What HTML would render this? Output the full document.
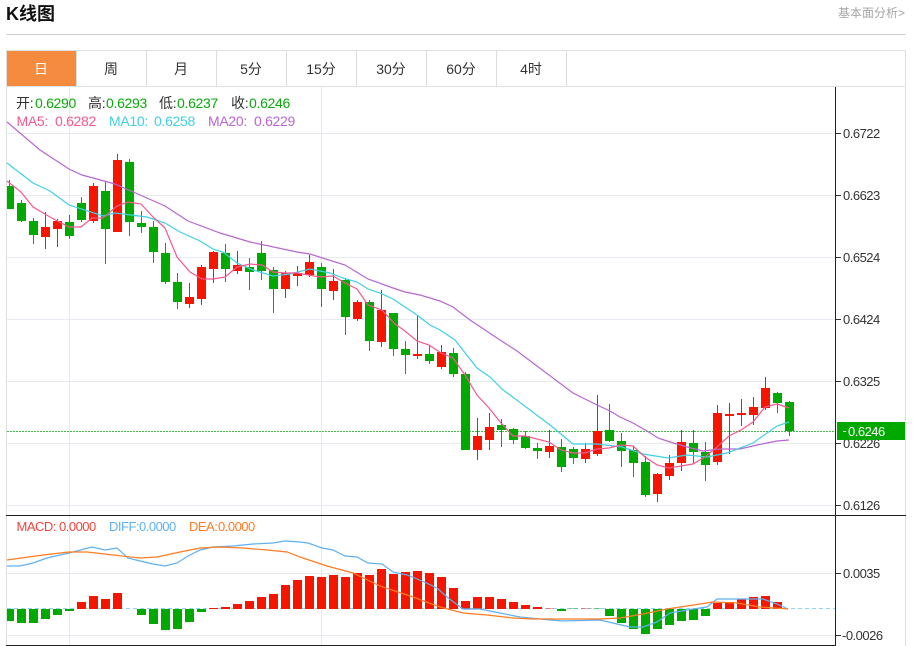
<!DOCTYPE html>
<html lang="zh-CN">
<head>
<meta charset="utf-8">
<title>K线图</title>
<style>
html,body{margin:0;padding:0;background:#fff;width:913px;height:646px;overflow:hidden}
svg{display:block;font-family:"Liberation Sans","Noto Sans CJK SC",sans-serif}
.tab{font-size:14px;fill:#333;text-anchor:middle}
.ax{font-size:13px;letter-spacing:-.5px;fill:#333}
.lg{font-size:14px;letter-spacing:-.3px}
.ml{font-size:13px;letter-spacing:-.5px}
</style>
</head>
<body>
<svg width="913" height="646" viewBox="0 0 913 646" xmlns="http://www.w3.org/2000/svg">
<!-- header -->
<text x="6" y="20" font-size="18" font-weight="700" fill="#111">K线图</text>
<text x="838" y="17" font-size="12" fill="#a5a5a5">基本面分析&gt;</text>
<path d="M6 34.5H906" stroke="#cfcfcf" fill="none"/>
<!-- frame -->
<path d="M6.5 51V646M905.5 51V646M6 50.5H906M6 86.5H906" stroke="#e0e0e0" fill="none"/>
<!-- tabs -->
<rect x="7" y="51" width="69" height="35" fill="#f58b3f"/>
<path d="M76.5 51V86M146.5 51V86M216.5 51V86M286.5 51V86M356.5 51V86M426.5 51V86M496.5 51V86M566.5 51V86" stroke="#dcdcdc" fill="none"/>
<text class="tab" x="41" y="74" style="fill:#fff">日</text>
<text class="tab" x="111" y="74">周</text>
<text class="tab" x="181" y="74">月</text>
<text class="tab" x="251" y="74">5分</text>
<text class="tab" x="321" y="74">15分</text>
<text class="tab" x="391" y="74">30分</text>
<text class="tab" x="461" y="74">60分</text>
<text class="tab" x="531" y="74">4时</text>
<!-- grid -->
<path d="M7 133.5H835M7 195.5H835M7 257.5H835M7 319.5H835M7 381.5H835M7 443.5H835M7 505.5H835M7 573.5H835M7 635.5H835M69.5 87V515M321.5 87V515M69.5 516V645M321.5 516V645" stroke="#e6ebf1" fill="none"/>
<!-- price dotted line -->
<path d="M7 431.5H835" stroke="#45b545" stroke-dasharray="2 1" fill="none"/>
<!-- green wicks -->
<path stroke="#00a800" fill="none" d="M9.5 180V209M21.5 200V222M33.5 218V244M69.5 215V239M81.5 197V222M105.5 182V264M129.5 159V236M141.5 211V233M153.5 221V263M165.5 243V284M177.5 273V309M225.5 244V282M249.5 258V290M261.5 241V280M273.5 267V313M321.5 263V307M345.5 279V335M369.5 300V351M393.5 313V356M405.5 341V374M429.5 345V364M453.5 348V377M465.5 372V450M501.5 419V447M513.5 428V444M525.5 431V449M537.5 443V459M561.5 439V472M573.5 447V464M609.5 404V442M621.5 433V467M633.5 447V477M645.5 456V497M693.5 430V464M705.5 442V481M777.5 392V413M789.5 401V436"/>
<!-- red wicks -->
<path stroke="#f01a00" fill="none" d="M45.5 212V249M57.5 219V247M93.5 183V223M117.5 154V232M189.5 283V308M201.5 265V305M213.5 251V283M237.5 251V274M285.5 271V298M297.5 266V286M309.5 255V277M333.5 269V300M357.5 300V321M381.5 290V347M417.5 316V359M441.5 345V369M477.5 418V460M489.5 413V450M549.5 430V458M585.5 443V463M597.5 395V456M657.5 473V502M669.5 455V480M681.5 430V471M717.5 405V465M729.5 403V454M741.5 399V426M753.5 397V425M765.5 377V410"/>
<!-- green bodies -->
<path fill="#00a800" d="M7 186h7v23h-7zM17 203h9v18h-9zM29 221h9v14h-9zM65 222h9v14h-9zM77 203h9v17h-9zM101 191h9v38h-9zM125 162h9v60h-9zM137 223h9v4h-9zM149 227h9v25h-9zM161 253h9v29h-9zM173 282h9v20h-9zM221 253h9v16h-9zM245 267h9v5h-9zM257 253h9v18h-9zM269 270h9v19h-9zM317 267h9v22h-9zM341 280h9v37h-9zM365 302h9v39h-9zM389 313h9v36h-9zM401 349h9v6h-9zM425 354h9v7h-9zM449 353h9v21h-9zM461 374h9v76h-9zM497 425h9v5h-9zM509 429h9v11h-9zM521 436h9v12h-9zM533 448h9v3h-9zM557 447h9v20h-9zM569 449h9v9h-9zM605 430h9v11h-9zM617 441h9v10h-9zM629 450h9v13h-9zM641 462h9v33h-9zM689 443h9v9h-9zM701 452h9v13h-9zM773 393h9v10h-9zM785 402h9v29h-9z"/>
<!-- red bodies -->
<path fill="#f51600" d="M41 227h9v10h-9zM53 221h9v8h-9zM89 186h9v35h-9zM113 160h9v72h-9zM185 297h9v7h-9zM197 267h9v32h-9zM209 252h9v17h-9zM233 265h9v6h-9zM281 273h9v16h-9zM293 273h9v3h-9zM305 262h9v13h-9zM329 281h9v10h-9zM353 302h9v17h-9zM377 310h9v32h-9zM413 354h9v2h-9zM437 352h9v15h-9zM473 436h9v14h-9zM485 427h9v13h-9zM545 446h9v6h-9zM581 449h9v10h-9zM593 431h9v23h-9zM653 474h9v20h-9zM665 463h9v13h-9zM677 442h9v21h-9zM713 413h9v49h-9zM725 414h9v2h-9zM737 413h9v2h-9zM749 407h9v8h-9zM761 388h9v20h-9z"/>
<!-- MA lines -->
<polyline fill="none" stroke="#b866d2" stroke-width="1.2" points="7,122 40,150 69,169 82,175 115,184 140,195 165,206 188,221 220,233 250,242 297,252 310,254 345,265 368,279 393,288 405,292 420,295 440,301 453,307 470,320 500,340 517,351 573,393 597,405 610,411 620,417 633,423 647,431 658,438 670,442 687,447 703,451 720,449 740,449 757,445 777,441 789,440"/>
<polyline fill="none" stroke="#3fd0e4" stroke-width="1.2" points="7,163 33,183 50,191 69,205 103,216 115,213 147,217 165,223 180,232 200,241 213,249 223,252 237,263 253,270 273,276 290,274 310,269 330,273 343,278 357,282 368,289 380,293 393,299 417,315 430,325 440,330 455,340 477,368 490,377 502,389 550,425 573,444 597,444 622,447 643,454 668,458 687,455 707,457 727,453 753,443 777,426 789,422"/>
<polyline fill="none" stroke="#f5588f" stroke-width="1.2" points="7,181 21,192 33,207 50,217 69,227 81,227 92,218 103,218 117,206 128,202 141,204 153,217 165,228 177,257 190,272 202,279 213,279 225,277 237,267 250,264 262,265 273,272 285,273 297,273 320,277 333,276 345,283 357,289 368,305 382,310 395,324 405,331 417,341 429,345 441,353 453,358 465,375 477,395 489,408 501,423 513,436 525,436 549,442 561,450 573,453 585,453 597,449 609,448 621,445 633,446 645,457 657,465 669,468 681,466 693,464 705,457 717,447 729,436 741,430 753,422 765,407 777,404 789,408"/>
<!-- legend -->
<text class="lg" y="108" fill="#333"><tspan x="16">开:</tspan><tspan x="35" fill="#0aa80a">0.6290</tspan><tspan x="88">高:</tspan><tspan x="106" fill="#0aa80a">0.6293</tspan><tspan x="159">低:</tspan><tspan x="177" fill="#0aa80a">0.6237</tspan><tspan x="231">收:</tspan><tspan x="249" fill="#0aa80a">0.6246</tspan></text>
<text class="lg" y="126"><tspan x="16.5" fill="#f5588f">MA5:</tspan><tspan x="55" fill="#f5588f">0.6282</tspan><tspan x="109" fill="#3fd0e4">MA10:</tspan><tspan x="154" fill="#3fd0e4">0.6258</tspan><tspan x="208" fill="#b866d2">MA20:</tspan><tspan x="254" fill="#b866d2">0.6229</tspan></text>
<!-- MACD zero line -->
<path d="M7 608.5H835" stroke="#8fd6f2" stroke-dasharray="4 3" fill="none"/>
<!-- MACD bars -->
<path fill="#00a800" d="M7 609h7v12h-7zM17 609h9v14h-9zM29 609h9v14h-9zM41 609h9v10h-9zM53 609h9v6h-9zM65 609h9v2h-9zM137 609h9v6h-9zM149 609h9v15h-9zM161 609h9v21h-9zM173 609h9v20h-9zM185 609h9v13h-9zM197 609h9v3h-9zM557 609h9v2h-9zM605 609h9v7h-9zM617 609h9v14h-9zM629 609h9v20h-9zM641 609h9v25h-9zM653 609h9v20h-9zM665 609h9v16h-9zM677 609h9v12h-9zM689 609h9v11h-9zM701 609h9v7h-9z"/>
<path fill="#f51600" d="M77 602h9v7h-9zM89 596h9v13h-9zM101 599h9v10h-9zM113 593h9v16h-9zM209 608h9v1h-9zM221 607h9v2h-9zM233 604h9v5h-9zM245 601h9v8h-9zM257 597h9v12h-9zM269 594h9v15h-9zM281 585h9v24h-9zM293 580h9v29h-9zM305 576h9v33h-9zM317 577h9v32h-9zM329 575h9v34h-9zM341 577h9v32h-9zM353 573h9v36h-9zM365 575h9v34h-9zM377 569h9v40h-9zM389 574h9v35h-9zM401 572h9v37h-9zM413 571h9v38h-9zM425 573h9v36h-9zM437 577h9v32h-9zM449 588h9v21h-9zM461 601h9v8h-9zM473 597h9v12h-9zM485 597h9v12h-9zM497 599h9v10h-9zM509 602h9v7h-9zM521 605h9v4h-9zM533 607h9v2h-9zM713 603h9v6h-9zM725 602h9v7h-9zM737 599h9v10h-9zM749 597h9v12h-9zM761 596h9v13h-9zM773 602h9v7h-9z"/>
<path fill="#f51600" opacity=".4" d="M545 608h9v1h-9zM581 608h9v1h-9z"/>
<path fill="#00a800" opacity=".4" d="M569 608h9v1h-9zM593 608h9v1h-9z"/>
<!-- MACD lines -->
<polyline fill="none" stroke="#5fb0f2" stroke-width="1.2" points="7,566 20,566 33,563 47,558 69,553 92,547 105,550 117,548 128,558 140,561 153,564 165,566 177,563 188,556 200,550 213,547 233,546 253,544 273,543 285,541 300,542 308,543 322,548 333,550 345,556 357,557 368,563 382,564 393,572 407,575 422,581 437,588 447,597 463,609 480,609 500,613 520,617 540,619 562,621 600,620 617,624 630,627 643,627 657,622 670,613 693,609 707,607 717,599 740,599 763,599 777,604 788,609"/>
<polyline fill="none" stroke="#ff7b22" stroke-width="1.2" points="7,560 43,555 69,552 87,552 113,555 140,558 157,557 180,552 200,548 220,547 243,548 267,550 287,552 300,557 327,566 353,573 380,586 413,597 440,607 463,613 487,615 513,618 533,619 600,619 620,618 643,614 667,609 687,606 713,602 737,603 760,607 788,609"/>
<!-- MACD legend -->
<text class="ml" y="531"><tspan x="16.5" fill="#f2443c">MACD:</tspan><tspan x="59" fill="#f2443c">0.0000</tspan><tspan x="109" fill="#5fb0f2">DIFF:</tspan><tspan x="139" fill="#5fb0f2">0.0000</tspan><tspan x="189" fill="#ff7b22">DEA:</tspan><tspan x="218" fill="#ff7b22">0.0000</tspan></text>
<!-- axes -->
<path d="M835.5 87V646M6 515.5H906M6 645.5H836" stroke="#222" fill="none"/>
<path d="M836 133.5h5M836 195.5h5M836 257.5h5M836 319.5h5M836 381.5h5M836 443.5h5M836 505.5h5M836 573.5h5M836 635.5h5" stroke="#333" fill="none"/>
<text class="ax" x="843" y="138">0.6722</text>
<text class="ax" x="843" y="200">0.6623</text>
<text class="ax" x="843" y="262">0.6524</text>
<text class="ax" x="843" y="324">0.6424</text>
<text class="ax" x="843" y="386">0.6325</text>
<text class="ax" x="843" y="448">0.6226</text>
<text class="ax" x="843" y="510">0.6126</text>
<text class="ax" x="843" y="578">0.0035</text>
<text class="ax" x="842" y="640">-0.0026</text>
<!-- current price -->
<rect x="837" y="422" width="68" height="18" fill="#00a800"/>
<path d="M843 431.5h3" stroke="#fff" fill="none"/>
<text class="ax" x="848" y="436" style="fill:#fff">0.6246</text>
</svg>
</body>
</html>
